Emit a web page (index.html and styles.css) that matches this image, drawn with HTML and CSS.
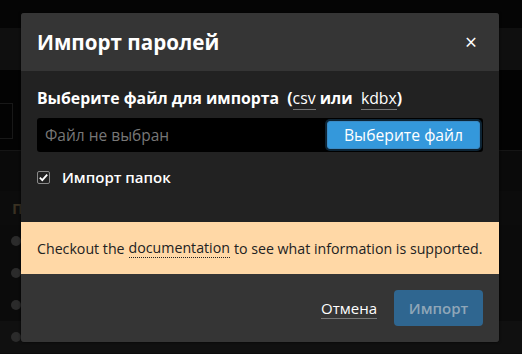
FILE: index.html
```html
<!DOCTYPE html>
<html>
<head>
  <title>Импорт паролей</title>
  <link rel="stylesheet" href="styles.css">
</head>
<body>
  <div class="page">
    <div class="topbar"></div>
    <div class="subbar"></div>
    <div class="filters"><div class="filter-box"></div></div>
    <div class="list-head"></div>
    <div class="group-title">Папки</div>
    <ul class="list">
      <li><span class="dot"></span></li>
      <li><span class="dot"></span></li>
      <li><span class="dot"></span></li>
      <li><span class="dot"></span></li>
    </ul>
  </div>

  <div class="backdrop">
    <div class="modal">
      <div class="modal-header">
        <h2>Импорт паролей</h2>
        <button class="close" type="button">&times;</button>
      </div>
      <div class="modal-body">
        <label class="file-label">Выберите файл для импорта&nbsp; (<abbr>csv</abbr> или&nbsp; <abbr>kdbx</abbr>)</label>
        <div class="file-input">
          <span class="file-name">Файл не выбран</span>
          <button class="btn-file" type="button">Выберите файл</button>
        </div>
        <label class="check">
          <span class="box">
            <svg width="11" height="11" viewBox="0 0 11 11"><path d="M1.8 5.6 L4.3 8.1 L9.2 2.6" fill="none" stroke="#fff" stroke-width="1.8"/></svg>
          </span>
          Импорт папок
        </label>
      </div>
      <div class="notice">
        Checkout the <a href="#">documentation</a> to see what information is supported.
      </div>
      <div class="modal-footer">
        <a href="#" class="cancel">Отмена</a>
        <button class="btn-import" type="button" disabled>Импорт</button>
      </div>
    </div>
  </div>
</body>
</html>
```

FILE: styles.css
```css
body {
  margin: 0;
  padding: 0;
  background-color: #0b0b0b;
  font-family: "Open Sans", "Noto Sans", sans-serif;
  width: 522px;
  height: 354px;
  overflow: hidden;
  position: relative;
}

.page {
  height: 354px;
}

.topbar {
  height: 28px;
  background-color: #050505;
}

.subbar {
  height: 42px;
  background-color: #0f0f0f;
}

.filters {
  height: 80px;
  background-color: #030303;
  padding-top: 33px;
  box-sizing: border-box;
}

.filter-box {
  width: 12px;
  height: 34px;
  border: 1px solid #181818;
  border-left: none;
}

.list-head {
  height: 40px;
  background-color: #0a0a0a;
  border-top: 1px solid #151515;
}

.group-title {
  height: 34px;
  padding-left: 12px;
  color: #3a3122;
  font-weight: bold;
  font-size: 15px;
  line-height: 34px;
  background-color: #0c0c0c;
}

.list {
  list-style: none;
  margin: 0;
  padding: 0;
}

.list li {
  height: 32px;
  display: flex;
  align-items: center;
  padding-left: 11px;
  background-color: #0b0b0b;
}

.list li:last-child {
  background-color: #101010;
}

.dot {
  width: 10px;
  height: 10px;
  border-radius: 50%;
  background-color: #2b2b2b;
}

.backdrop {
  position: absolute;
  top: 0;
  left: 0;
  right: 0;
  bottom: 0;
}

.modal {
  position: absolute;
  top: 13px;
  left: 21px;
  width: 478px;
  height: 329px;
  background-color: #222222;
  border-radius: 3px;
  overflow: hidden;
  display: flex;
  flex-direction: column;
  box-shadow: 0 0 3px rgba(0, 0, 0, 0.8);
}

.modal-header {
  height: 58px;
  background-color: #353535;
  display: flex;
  align-items: center;
  justify-content: space-between;
  padding: 0 16px;
}

.modal-header h2 {
  margin: 0;
  color: #ffffff;
  font-size: 20.6px;
  font-weight: bold;
}

.close {
  background: none;
  border: none;
  color: #ffffff;
  font-size: 21px;
  padding: 0;
  margin-right: 6px;
  font-family: "Open Sans", sans-serif;
  line-height: 1;
}

.modal-body {
  padding: 14px 16px 0 16px;
  flex: 1;
}

.file-label {
  display: block;
  color: #ffffff;
  font-size: 15.8px;
  font-weight: bold;
  line-height: 20px;
  padding-top: 3px;
}

abbr {
  font-weight: normal;
  text-decoration: none;
  border-bottom: 1px solid #777;
}

.file-input {
  margin-top: 10px;
  height: 34px;
  background-color: #000000;
  border-radius: 3px;
  display: flex;
  align-items: center;
  justify-content: space-between;
  padding: 0 3px 0 8px;
}

.file-name {
  color: #777777;
  font-size: 15.5px;
}

.btn-file {
  height: 28px;
  width: 153px;
  background-color: #3498db;
  color: #ffffff;
  border: 1px solid #3a8ac5;
  border-radius: 3px;
  font-family: "Open Sans", sans-serif;
  font-size: 15.7px;
  box-shadow: 0 0 0 2px #0d2536;
}

.check {
  display: flex;
  align-items: center;
  margin-top: 15px;
  color: #ffffff;
  font-size: 15px;
  font-weight: 600;
}

.box {
  width: 11px;
  height: 11px;
  border: 1px solid #8a8a8a;
  border-radius: 2px;
  margin-right: 12px;
  display: flex;
}

.notice {
  height: 52px;
  background-color: #ffd8a6;
  color: #222222;
  font-size: 14.2px;
  padding-left: 16px;
  display: flex;
  align-items: center;
}

.notice a {
  color: #222222;
  text-decoration: none;
  border-bottom: 1px dotted #222;
  margin: 0 4px;
}

.modal-footer {
  height: 68px;
  background-color: #353535;
  display: flex;
  align-items: center;
  justify-content: flex-end;
  padding: 0 16px;
}

.cancel {
  color: #ffffff;
  font-size: 15px;
  text-decoration: none;
  border-bottom: 1px solid #777;
  line-height: 19px;
  margin-right: 17px;
  margin-top: 1px;
}

.btn-import {
  width: 89px;
  height: 36px;
  background-color: #2f6690;
  color: #8fa6b8;
  border: none;
  border-radius: 4px;
  font-family: "Open Sans", sans-serif;
  font-size: 15px;
  font-weight: 600;
}
```
